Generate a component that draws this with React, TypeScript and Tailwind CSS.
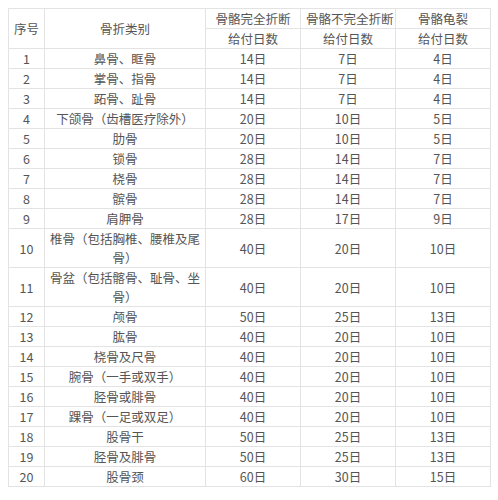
import React from 'react';

const rows: [string, string, string, string, string][] = [
  ['1', '鼻骨、眶骨', '14日', '7日', '4日'],
  ['2', '掌骨、指骨', '14日', '7日', '4日'],
  ['3', '跖骨、趾骨', '14日', '7日', '4日'],
  ['4', '下颌骨（齿槽医疗除外）', '20日', '10日', '5日'],
  ['5', '肋骨', '20日', '10日', '5日'],
  ['6', '锁骨', '28日', '14日', '7日'],
  ['7', '桡骨', '28日', '14日', '7日'],
  ['8', '髌骨', '28日', '14日', '7日'],
  ['9', '肩胛骨', '28日', '17日', '9日'],
  ['10', '椎骨（包括胸椎、腰椎及尾骨）', '40日', '20日', '10日'],
  ['11', '骨盆（包括髂骨、耻骨、坐骨）', '40日', '20日', '10日'],
  ['12', '颅骨', '50日', '25日', '13日'],
  ['13', '肱骨', '40日', '20日', '10日'],
  ['14', '桡骨及尺骨', '40日', '20日', '10日'],
  ['15', '腕骨（一手或双手）', '40日', '20日', '10日'],
  ['16', '胫骨或腓骨', '40日', '20日', '10日'],
  ['17', '踝骨（一足或双足）', '40日', '20日', '10日'],
  ['18', '股骨干', '50日', '25日', '13日'],
  ['19', '胫骨及腓骨', '50日', '25日', '13日'],
  ['20', '股骨颈', '60日', '30日', '15日'],
];

const cell = 'border border-[#e3e3e3] px-[5px] py-0 text-center align-middle font-normal';
const head = cell + ' whitespace-nowrap';

export default function App() {
  return (
    <div
      className="bg-white w-[498px] h-[500px] pt-[8px] pl-[8px] text-[#555] text-[12.5px] leading-[19px]"
      style={{ fontFamily: '"Noto Sans CJK SC", "Noto Sans", sans-serif' }}
    >
      <table className="border-collapse table-fixed w-[482px]">
        <colgroup>
          <col className="w-[36px]" />
          <col className="w-[161px]" />
          <col className="w-[95px]" />
          <col className="w-[95px]" />
          <col className="w-[95px]" />
        </colgroup>
        <thead>
          <tr>
            <th rowSpan={2} className={head}>序号</th>
            <th rowSpan={2} className={head}>骨折类别</th>
            <th className={head}>骨骼完全折断</th>
            <th className={head}>骨骼不完全折断</th>
            <th className={head}>骨骼龟裂</th>
          </tr>
          <tr>
            <th className={head}>给付日数</th>
            <th className={head}>给付日数</th>
            <th className={head}>给付日数</th>
          </tr>
        </thead>
        <tbody>
          {rows.map((r) => (
            <tr key={r[0]}>
              {r.map((v, i) => (
                <td key={i} className={cell}>{v}</td>
              ))}
            </tr>
          ))}
        </tbody>
      </table>
    </div>
  );
}
